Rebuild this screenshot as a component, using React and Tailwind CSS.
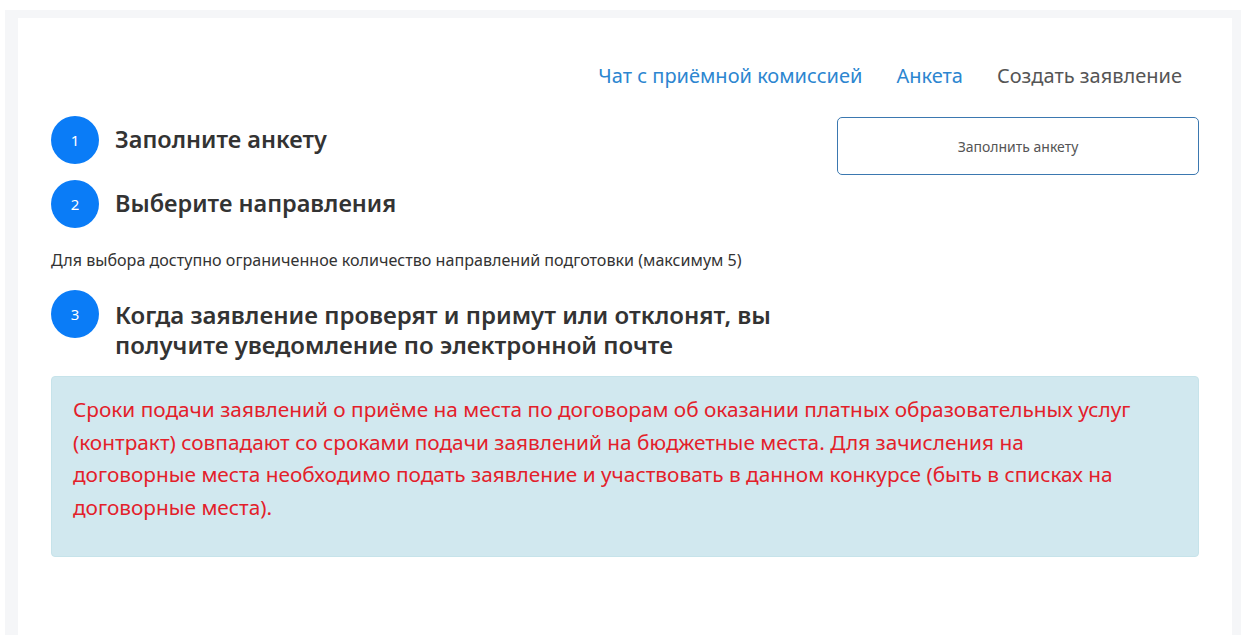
const steps = [
  { n: 1, title: "Заполните анкету" },
  { n: 2, title: "Выберите направления" },
]

function StepBadge({ n }) {
  return (
    <div className="flex h-12 w-12 shrink-0 items-center justify-center rounded-full bg-[#0a7cf7] text-[15px] text-white">
      {n}
    </div>
  )
}

export default function App() {
  return (
    <div className="bg-white pl-[5px] pt-[10px] font-['Noto_Sans',sans-serif]">
      <div className="h-[625px] bg-[#f5f6f8] pl-[13px] pr-[9px] pt-2">
        <div className="h-full bg-white px-[33px] pt-[42px]">
          <nav className="flex h-[32px] items-center justify-end text-[20px]">
            <a className="px-[17px] text-[#2c86d0]" href="#">Чат с приёмной комиссией</a>
            <a className="px-[17px] text-[#2c86d0]" href="#">Анкета</a>
            <a className="px-[17px] text-[#555]" href="#">Создать заявление</a>
          </nav>

          <div className="mt-[24px] flex justify-between">
            <div className="w-[740px]">
              <div className="flex flex-col gap-4">
                {steps.map((s) => (
                  <div key={s.n} className="flex items-center gap-4">
                    <StepBadge n={s.n} />
                    <h3 className="text-[23.5px] font-semibold text-[#333]">{s.title}</h3>
                  </div>
                ))}
              </div>
              <p className="mt-[20px] text-[16.1px] leading-[24px] text-[#333]">
                Для выбора доступно ограниченное количество направлений подготовки (максимум 5)
              </p>
              <div className="mt-[18px] flex items-start gap-4">
                <StepBadge n={3} />
                <h3 className="mt-[10px] w-[675px] text-[24px] font-semibold leading-[30px] text-[#333]">
                  Когда заявление проверят и примут или отклонят, вы получите уведомление по электронной почте
                </h3>
              </div>
            </div>
            <button className="mt-px h-[58px] w-[362px] rounded-[5px] border border-[#3b78b0] bg-white text-[14px] text-[#555]">
              Заполнить анкету
            </button>
          </div>

          <div className="mt-[16px] h-[181px] rounded-[4px] border border-[#c6e3ea] bg-[#d1e8ef] pl-[21px] pr-[20px] pt-[16px] text-[20.8px] leading-[32.5px] text-[#e3202a]">
            Сроки подачи заявлений о приёме на места по договорам об оказании платных образовательных услуг
            <br />
            (контракт) совпадают со сроками подачи заявлений на бюджетные места. Для зачисления на
            <br />
            договорные места необходимо подать заявление и участвовать в данном конкурсе (быть в списках на
            <br />
            договорные места).
          </div>
        </div>
      </div>
    </div>
  )
}
